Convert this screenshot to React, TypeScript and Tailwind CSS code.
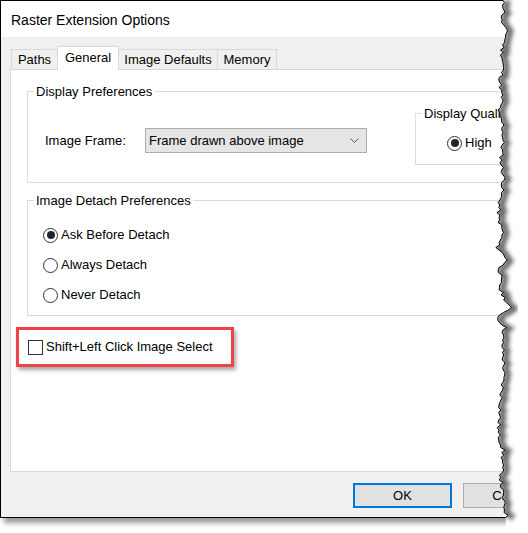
import React from 'react';

// rough shape of the torn right edge: [y, x]
const waypoints: [number, number][] = [
    [0, 502], [10, 505], [20, 501], [33, 507], [50, 502], [67, 503], [83, 500], [100, 502],
    [113, 498], [125, 503], [140, 503], [160, 501], [180, 504], [200, 500], [217, 498],
    [233, 503], [247, 497], [260, 508], [267, 500], [290, 500], [308, 510], [318, 497],
    [327, 505], [340, 502], [367, 504], [400, 501], [433, 498], [450, 503], [480, 501],
    [500, 503], [518, 507],
];

function buildTear(): [number, number][] {
    let s = 11;
    const rnd = () => {
        s = (s * 9301 + 49297) % 233280;
        return s / 233280;
    };
    const pts: [number, number][] = [];
    for (let y = 0; y <= 518; y += 2.5) {
        let i = 0;
        while (i < waypoints.length - 2 && waypoints[i + 1][0] < y) i++;
        const [y0, x0] = waypoints[i];
        const [y1, x1] = waypoints[i + 1];
        const t = Math.min(1, Math.max(0, (y - y0) / (y1 - y0)));
        const x = x0 + (x1 - x0) * t + (rnd() - 0.5) * 4;
        pts.push([x, y]);
    }
    return pts;
}

const TornEdge: React.FC = () => {
    const pts = buildTear();
    const last = pts[pts.length - 1];
    const line = pts.map(([x, y]) => `${x.toFixed(1)},${y}`).join(' ');
    const area = `${line} ${last[0].toFixed(1)},533 528,533 528,0`;
    const shadow = pts.map(([x, y]) => `${(x + 3).toFixed(1)},${y + 1}`).join(' ');
    return (
        <svg className="absolute inset-0 pointer-events-none" width="528" height="533" viewBox="0 0 528 533">
            <defs>
                <clipPath id="tear-area">
                    <polygon points={area} />
                </clipPath>
                <filter id="tear-blur" x="-20%" y="-5%" width="140%" height="110%">
                    <feGaussianBlur stdDeviation="2" />
                </filter>
            </defs>
            <polygon points={area} fill="#ffffff" />
            <g clipPath="url(#tear-area)">
                <polyline points={shadow} fill="none" stroke="#000" strokeOpacity="0.6" strokeWidth="6" filter="url(#tear-blur)" />
            </g>
            <polyline points={line} fill="none" stroke="#000" strokeWidth="1" />
        </svg>
    );
};

const Radio: React.FC<{ checked?: boolean; label: string }> = ({ checked, label }) => (
    <div className="flex items-center gap-[3px] h-[16px]">
        <span className="w-[15px] h-[15px] rounded-full border border-[#333333] bg-white flex items-center justify-center">
            {checked && <span className="w-[8px] h-[8px] rounded-full bg-[#1f2633]" />}
        </span>
        <span>{label}</span>
    </div>
);

export default function App() {
    return (
        <div className="relative w-[528px] h-[533px] bg-white overflow-hidden font-['Liberation_Sans',Arial,sans-serif] text-[13px] text-black">
            <div className="w-[528px] h-[518px] border-l border-t border-b border-black bg-[#f0f0f0] flex flex-col shadow-[4px_5px_5px_rgba(0,0,0,0.4)]">
                {/* title bar */}
                <div className="h-[36px] bg-white flex items-center pl-[10px] pt-[2px] text-[14px]">Raster Extension Options</div>

                <div className="flex-1 flex flex-col px-[9px]">
                    {/* tabs */}
                    <div className="mt-[9px] h-[24px] flex items-end pl-[1px]">
                        <div className="w-[46px] h-[21px] border border-r-0 border-b-0 border-[#d9d9d9] bg-[#f0f0f0] flex items-center justify-center">Paths</div>
                        <div className="relative z-10 w-[62px] h-[24px] border border-b-0 border-[#d9d9d9] bg-white flex items-center justify-center pb-[2px]">General</div>
                        <div className="w-[99px] h-[21px] border border-l-0 border-b-0 border-[#d9d9d9] bg-[#f0f0f0] flex items-center justify-center">Image Defaults</div>
                        <div className="w-[59px] h-[21px] border border-l-0 border-b-0 border-[#d9d9d9] bg-[#f0f0f0] flex items-center justify-center">Memory</div>
                    </div>

                    {/* tab page */}
                    <div className="h-[403px] -mt-[1px] bg-white border border-[#d9d9d9] flex flex-col pl-[16px]">
                        <fieldset className="mt-[14px] border border-[#dcdcdc]">
                            <legend className="ml-[6px] px-[2px] leading-[15px]">Display Preferences</legend>
                            <div className="flex items-start pb-[17px]">
                                <div className="flex items-center mt-[29px] pl-[17px]">
                                    <span className="w-[100px]">Image Frame:</span>
                                    <div className="w-[222px] h-[25px] bg-[#e5e5e5] border border-[#adadad] flex items-center justify-between pl-[3px] pr-[7px]">
                                        <span>Frame drawn above image</span>
                                        <svg width="9" height="5" viewBox="0 0 9 5">
                                            <polyline points="0.5,0.5 4.5,4.5 8.5,0.5" fill="none" stroke="#555" strokeWidth="1" />
                                        </svg>
                                    </div>
                                </div>
                                <fieldset className="ml-[48px] mt-[7px] w-[130px] border border-[#dcdcdc] pl-[31px] pb-[13px]">
                                    <legend className="-ml-[25px] px-[2px] leading-[15px] whitespace-nowrap">Display Quality</legend>
                                    <div className="mt-[14px]">
                                        <Radio checked label="High" />
                                    </div>
                                </fieldset>
                            </div>
                        </fieldset>

                        <fieldset className="mt-[10px] border border-[#dcdcdc]">
                            <legend className="ml-[6px] px-[2px] leading-[15px]">Image Detach Preferences</legend>
                            <div className="flex flex-col gap-[14px] pt-[19px] pb-[12px] pl-[15px]">
                                <Radio checked label="Ask Before Detach" />
                                <Radio label="Always Detach" />
                                <Radio label="Never Detach" />
                            </div>
                        </fieldset>

                        <div className="relative self-start mt-[23px] ml-[1px] h-[16px] flex items-center gap-[3px]">
                            <span className="w-[15px] h-[15px] border border-[#333333] bg-white" />
                            <span>Shift+Left Click Image Select</span>
                            <div className="absolute left-[-12px] top-[-12px] w-[218px] h-[40px] border-[3px] border-[#ee4449] shadow-[2px_3px_4px_rgba(0,0,0,0.35)]" />
                        </div>
                    </div>

                    {/* buttons */}
                    <div className="mt-[11px] flex gap-[11px] pl-[343px]">
                        <button className="shrink-0 w-[99px] h-[25px] border-2 border-[#0078d7] bg-[#e1e1e1] flex items-center justify-center">OK</button>
                        <button className="shrink-0 w-[99px] h-[25px] border border-[#adadad] bg-[#e1e1e1] flex items-center justify-center">Cancel</button>
                    </div>
                </div>
            </div>

            <TornEdge />
        </div>
    );
}
